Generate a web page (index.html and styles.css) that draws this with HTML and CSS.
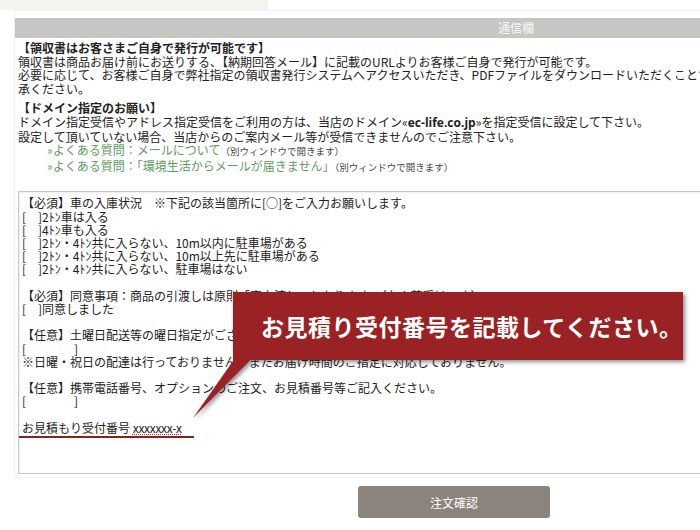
FILE: index.html
```html
<!DOCTYPE html>
<html>
<head>
  <meta charset="utf-8">
  <link rel="stylesheet" href="styles.css">
</head>
<body>
  <div class="page">
    <div class="topbox"></div>

    <div class="panel">
      <div class="panel-head">通信欄</div>

      <div class="notes">
        <p>
          <b>【領収書はお客さまご自身で発行が可能です】</b><br>
          領収書は商品お届け前にお送りする、【納期回答メール】に記載のURLよりお客様ご自身で発行が可能です。<br>
          必要に応じて、お客様ご自身で弊社指定の領収書発行システムへアクセスいただき、PDFファイルをダウンロードいただくことで領収書をご<br>
          承ください。
        </p>
        <p>
          <b>【ドメイン指定のお願い】</b><br>
          ドメイン指定受信やアドレス指定受信をご利用の方は、当店のドメイン«<b class="latin">ec-life.co.jp</b>»を指定受信に設定して下さい。<br>
          設定して頂いていない場合、当店からのご案内メール等が受信できませんのでご注意下さい。<br>
          <span class="faq"><a>»よくある質問：メールについて</a><small>（別ウィンドウで開きます）</small></span><br>
          <span class="faq"><a>»よくある質問：「環境生活からメールが届きません」</a><small>（別ウィンドウで開きます）</small></span>
        </p>
      </div>

      <div class="memo">【必須】車の入庫状況　※下記の該当箇所に[○]をご入力お願いします。
[　]2ﾄﾝ車は入る
[　]4ﾄﾝ車も入る
[　]2ﾄﾝ・4ﾄﾝ共に入らない、10m以内に駐車場がある
[　]2ﾄﾝ・4ﾄﾝ共に入らない、10m以上先に駐車場がある
[　]2ﾄﾝ・4ﾄﾝ共に入らない、駐車場はない

【必須】同意事項：商品の引渡しは原則「車上渡し」となります。（有人荷受けです）
[　]同意しました

【任意】土曜日配送等の曜日指定がございましたらご入力ください。
[　　　　]
※日曜・祝日の配達は行っておりません。またお届け時間のご指定に対応しておりません。

【任意】携帯電話番号、オプションのご注文、お見積番号等ご記入ください。
[　　　　]

<span class="marked">お見積もり受付番号 <span class="typo">xxxxxxx-x</span></span></div>
    </div>

    <div class="actions">
      <button class="confirm">注文確認</button>
    </div>

    <div class="callout">
      <div class="callout-box">お見積り受付番号を記載してください。</div>
      <div class="callout-tail"></div>
    </div>
  </div>
</body>
</html>
```

FILE: styles.css
```css
html, body {
  margin: 0;
  background: #fff;
}

body {
  width: 700px;
  height: 530px;
  overflow: hidden;
  font-family: "Noto Sans CJK JP", "Noto Sans", sans-serif;
  font-size: 12px;
  color: #222;
}

.page {
  position: relative;
  width: 700px;
  height: 530px;
}

/* remains of the block above */
.topbox {
  width: 268px;
  height: 10px;
  background-color: #f4f3f0;
}

.panel {
  margin-left: 14px;
  width: 1002px;
  padding-top: 7px;
  border-top: 1px solid #f2f2f2;
  border-left: 1px solid #f0f0f0;
  border-bottom: 1px solid #f0f0f0;
  padding-bottom: 3px;
}

.panel-head {
  height: 20px;
  line-height: 20px;
  background-color: #c7c6c2;
  color: #f7f7f5;
  text-align: center;
  font-size: 12px;
}

/* notes under the heading */
.notes {
  padding: 3px 0 0 3px;
  line-height: 13.6px;
  white-space: nowrap;
}

.notes p {
  margin: 0 0 6px;
}

.notes b {
  font-weight: bold;
}

.notes .latin {
  font-family: "Open Sans", "Noto Sans CJK JP", sans-serif;
}

.faq {
  padding-left: 29px;
}

.faq a {
  color: #5f9c5f;
}

.faq small {
  font-size: 9.5px;
  color: #444;
}

/* the message field */
.memo {
  margin: 17px 0 0 3px;
  height: 273px;
  padding: 4px 3px;
  border: 1px solid #c9c9c9;
  box-shadow: inset 1px 1px 2px rgba(0, 0, 0, 0.08);
  white-space: pre;
  line-height: 13.2px;
  color: #222;
  overflow: hidden;
}

.marked {
  display: inline-block;
  margin-left: -4px;
  padding: 0 12px 2px 4px;
  line-height: 12px;
  border-bottom: 2px solid #8c1f1f;
}

.typo {
  text-decoration: underline dotted #e03030;
  letter-spacing: -0.3px;
}

.actions {
  padding: 8px 0 0 358px;
}

.confirm {
  width: 192px;
  height: 32px;
  border: 0;
  border-radius: 3px;
  background-color: #8b837c;
  color: #fff;
  font-family: "Noto Sans CJK JP", sans-serif;
  font-size: 12px;
}

/* annotation balloon */
.callout {
  position: absolute;
  left: 233px;
  top: 292px;
  filter: drop-shadow(2px 2px 2px rgba(0, 0, 0, 0.45));
}

.callout-box {
  width: 422px;
  height: 68px;
  padding-left: 28px;
  display: flex;
  align-items: center;
  background-color: #9a2224;
  color: #fff;
  font-size: 23px;
  font-weight: bold;
  letter-spacing: 0.5px;
  white-space: nowrap;
}

.callout-tail {
  position: absolute;
  left: -40px;
  top: 48px;
  width: 77px;
  height: 78px;
  background-color: #9a2224;
  clip-path: polygon(40px 0, 77px 0, 0 78px, 40px 21px);
}
```
